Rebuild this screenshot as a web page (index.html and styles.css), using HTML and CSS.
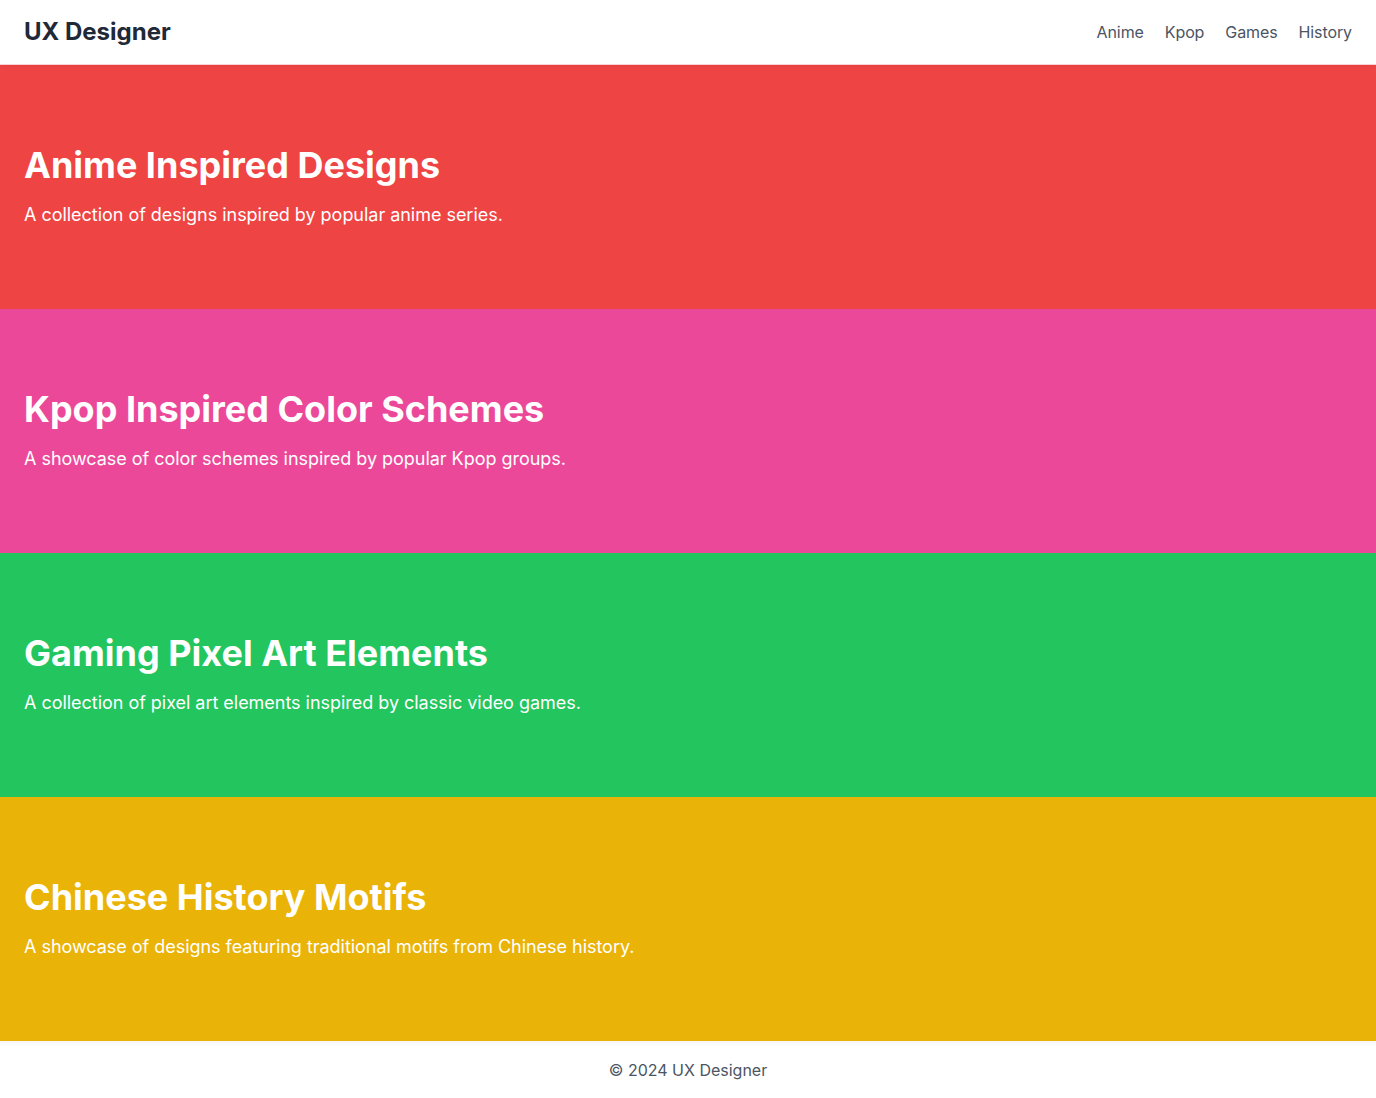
FILE: index.html
```html
<!DOCTYPE html>
<html lang="en">
<head>
<meta charset="utf-8">
<title>UX Designer</title>
<link rel="stylesheet" href="styles.css">
</head>
<body>
<header class="site-header">
  <div class="logo">UX Designer</div>
  <nav class="nav">
    <a href="#anime">Anime</a>
    <a href="#kpop">Kpop</a>
    <a href="#games">Games</a>
    <a href="#history">History</a>
  </nav>
</header>
<main>
  <section id="anime" class="band band-red">
    <h2>Anime Inspired Designs</h2>
    <p>A collection of designs inspired by popular anime series.</p>
  </section>
  <section id="kpop" class="band band-pink">
    <h2>Kpop Inspired Color Schemes</h2>
    <p>A showcase of color schemes inspired by popular Kpop groups.</p>
  </section>
  <section id="games" class="band band-green">
    <h2>Gaming Pixel Art Elements</h2>
    <p>A collection of pixel art elements inspired by classic video games.</p>
  </section>
  <section id="history" class="band band-yellow">
    <h2>Chinese History Motifs</h2>
    <p>A showcase of designs featuring traditional motifs from Chinese history.</p>
  </section>
</main>
<footer class="site-footer">
  <p>© 2024 UX Designer</p>
</footer>
</body>
</html>
```
FILE: styles.css
```css
* { box-sizing: border-box; }
html, body { margin: 0; padding: 0; }
body {
  font-family: Inter, "Noto Sans", sans-serif;
  background: #fff;
  color: #1f2937;
}
.site-header {
  position: relative;
  z-index: 2;
  display: flex;
  justify-content: space-between;
  align-items: center;
  padding: 16px 24px;
  background: #fff;
  border-bottom: 1px solid #f9d3d3;
  box-shadow: 0 2px 4px -1px rgba(0,0,0,0.06);
}
.logo {
  font-size: 24px;
  line-height: 32px;
  font-weight: 700;
  color: #1f2937;
}
.nav {
  display: flex;
  gap: 21px;
  margin-bottom: 1px;
}
.nav a {
  color: #4b5563;
  text-decoration: none;
  font-size: 16px;
  line-height: 24px;
  letter-spacing: -0.1px;
}
.band {
  padding: 80px 24px;
  color: #fff;
}
.band h2 {
  margin: 0;
  font-size: 36px;
  line-height: 40px;
  font-weight: 700;
}
.band p {
  margin: 16px 0 0;
  font-size: 18px;
  line-height: 28px;
  letter-spacing: -0.03px;
}
.band-red { background: #ef4444; }
.band-pink { background: #ec4899; }
.band-green { background: #22c55e; }
.band-yellow { background: #eab308; }
.site-footer {
  padding: 17px 24px 16px;
  background: linear-gradient(#f6f6f6, #fff 6px);
  text-align: center;
}
.site-footer p {
  margin: 0;
  font-size: 16px;
  line-height: 24px;
  color: #4b5563;
}
```
